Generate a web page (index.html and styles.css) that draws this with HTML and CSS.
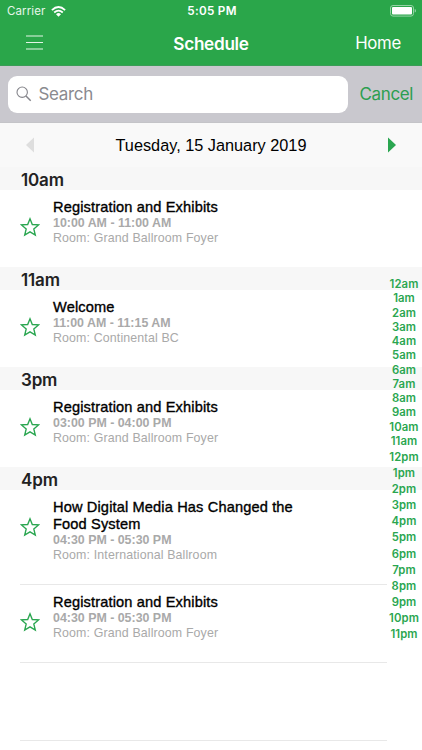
FILE: index.html
```html
<!DOCTYPE html>
<html lang="en">
<head>
<meta charset="utf-8">
<title>Schedule</title>
<link rel="stylesheet" href="styles.css">
</head>
<body>
<svg class="defs" width="0" height="0"><symbol id="star" viewBox="0 0 20 20"><path d="M10 1.8 12.3 7.5 18.5 7.9 13.8 11.9 15.3 18 10 14.8 4.7 18 6.2 11.9 1.5 7.9 7.7 7.5Z" fill="none" stroke="#2aa650" stroke-width="1.35"/></symbol></svg>
<main class="screen">
  <header class="topbar">
    <div class="status">
      <div class="carrier"><span>Carrier</span>
        <svg width="15" height="11" viewBox="0 0 15 11"><g fill="none" stroke="#fff" stroke-width="1.8"><path d="M.9 4.1Q7.5-2 14.1 4.1"/><path d="M3.2 6.5Q7.5 2.7 11.8 6.5"/></g><path d="M5 8.2Q7.5 6 10 8.2L7.5 10.7Z" fill="#fff"/></svg>
      </div>
      <span class="clock">5:05 PM</span>
      <svg class="battery" width="27" height="12" viewBox="0 0 27 12"><rect x=".5" y=".5" width="23" height="10.6" rx="2.5" fill="none" stroke="#94d3a5"/><rect x="2" y="2" width="20" height="7.6" rx="1" fill="#fff"/><path d="M24.7 4Q26 4.3 26 5.8T24.7 7.6Z" fill="#94d3a5"/></svg>
    </div>
    <nav class="nav">
      <svg class="burger" width="17" height="15" viewBox="0 0 17 15"><path d="M0 1H17M0 7.5H17M0 14H17" stroke="#e3f5e7" stroke-width="1.1"/></svg>
      <h1>Schedule</h1>
      <span class="home">Home</span>
    </nav>
  </header>
  <div class="search">
    <div class="field"><svg width="16" height="16" viewBox="0 0 16 16" fill="none" stroke="#85858b" stroke-width="1.1"><circle cx="6.2" cy="6.2" r="5.2"/><path d="M10 10 14.7 14.7" stroke-width="1.5"/></svg><span>Search</span></div>
    <span class="cancel">Cancel</span>
  </div>
  <div class="datebar">
    <svg width="8" height="16" viewBox="0 0 8 16"><path d="M8 .5V15.5L0 8Z" fill="#dedede"/></svg>
    <span class="date">Tuesday, 15 January 2019</span>
    <svg width="8" height="16" viewBox="0 0 8 16"><path d="M0 .5V15.5L8 8Z" fill="#2aa650"/></svg>
  </div>
  <section class="list">
    <h2>10am</h2>
    <article><svg class="star"><use href="#star"/></svg><div><h3>Registration and Exhibits</h3><p class="time">10:00 AM - 11:00 AM</p><p class="room">Room: Grand Ballroom Foyer</p></div></article>
    <h2>11am</h2>
    <article><svg class="star"><use href="#star"/></svg><div><h3>Welcome</h3><p class="time">11:00 AM - 11:15 AM</p><p class="room">Room: Continental BC</p></div></article>
    <h2>3pm</h2>
    <article><svg class="star"><use href="#star"/></svg><div><h3>Registration and Exhibits</h3><p class="time">03:00 PM - 04:00 PM</p><p class="room">Room: Grand Ballroom Foyer</p></div></article>
    <h2>4pm</h2>
    <article class="tall"><svg class="star"><use href="#star"/></svg><div><h3>How Digital Media Has Changed the<br>Food System</h3><p class="time">04:30 PM - 05:30 PM</p><p class="room">Room: International Ballroom</p></div></article>
    <article class="last"><svg class="star"><use href="#star"/></svg><div><h3>Registration and Exhibits</h3><p class="time">04:30 PM - 05:30 PM</p><p class="room">Room: Grand Ballroom Foyer</p></div></article>
    <div class="empty"></div>
  </section>
  <aside class="index">
    <div class="am"><span>12am</span><span>1am</span><span>2am</span><span>3am</span><span>4am</span><span>5am</span><span>6am</span><span>7am</span><span>8am</span><span>9am</span><span>10am</span><span>11am</span></div>
    <div class="pm"><span>12pm</span><span>1pm</span><span>2pm</span><span>3pm</span><span>4pm</span><span>5pm</span><span>6pm</span><span>7pm</span><span>8pm</span><span>9pm</span><span>10pm</span><span>11pm</span></div>
  </aside>
</main>
</body>
</html>
```
FILE: styles.css
```css
* { box-sizing: border-box; }
body, h1, h2, h3, p { margin: 0; }
body { background: #fff; font-family: Inter, Roboto, sans-serif; }
.defs { position: absolute; }
.screen { position: relative; width: 422px; height: 750px; overflow: hidden; }
.topbar { height: 66px; background: #2aa64a; color: #fff; border-bottom: 1px solid #3b9c57; }
.status { display: grid; grid-template-columns: 1fr auto 1fr; height: 22px; padding: 0 5px 0 7px; align-items: center; }
.carrier { display: flex; align-items: center; gap: 6px; font-size: 11.5px; letter-spacing: .1px; color: #e6f6e9; }
.clock { font-size: 11.7px; font-weight: 600; letter-spacing: .3px; }
.battery { justify-self: end; }
.nav { display: grid; grid-template-columns: 1fr auto 1fr; height: 42px; padding: 0 21px 0 21px; align-items: center; }
.nav h1 { font-size: 17.2px; font-weight: 600; letter-spacing: -.3px; }
.home { justify-self: end; font-size: 16.8px; letter-spacing: -.3px; }
.burger { margin: -1px 0 0 5px; }
.search { display: flex; align-items: center; height: 57px; padding: 0 9px 0 8.4px; background: #c9c8ce; justify-content: space-between; border-bottom: 1px solid #c4c4c8; }
.field { display: flex; align-items: center; gap: 6px; width: 340px; height: 37px; padding-left: 8px; background: #fff; border-radius: 9px; color: #8a8a8f; font-size: 17px; letter-spacing: -.32px; }
.cancel { color: #2c9e50; font-size: 17px; letter-spacing: -.38px; }
.datebar { display: flex; align-items: center; justify-content: space-between; height: 44px; padding: 0 26px; background: #f9f9f9; font: 16.3px "Liberation Sans", sans-serif; }
.list h2 { height: 23px; padding-left: 21px; background: #f7f7f7; font: 600 17px/26px Inter, sans-serif; letter-spacing: -.15px; color: #222; }
.list article { display: flex; height: 77px; padding: 9px 0 0 20px; gap: 13px; font-family: "Liberation Sans", sans-serif; }
.star { flex: none; width: 20px; height: 20px; margin-top: 18px; }
.list h3 { font-size: 14.6px; line-height: 17px; font-weight: 400; letter-spacing: .14px; -webkit-text-stroke: .35px #000; }
.list p { font-size: 12.4px; line-height: 14.7px; color: #a9a9a9; white-space: nowrap; }
.list .time { font-weight: 700; }
.list .room { letter-spacing: .13px; }
.list .tall { height: 94.4px; }
.list .last, .empty { position: relative; }
.list .last::before, .empty::before, .empty::after { content: ""; position: absolute; left: 20px; width: 367px; height: 1px; top: 0; background: #e8e8e8; }
.list .last { height: 77.6px; padding-top: 9.6px; }
.empty { height: 79px; }
.empty::after { top: auto; bottom: 0; }
.index { position: absolute; right: 0; top: 277px; width: 36px; color: #2aa650; font-size: 11.3px; font-weight: 600; text-align: center; letter-spacing: .1px; }
.index span { display: block; }
.am span { height: 14.27px; line-height: 14.27px; }
.pm { margin-top: .8px; }
.pm span { height: 16.1px; line-height: 16.1px; }
```
